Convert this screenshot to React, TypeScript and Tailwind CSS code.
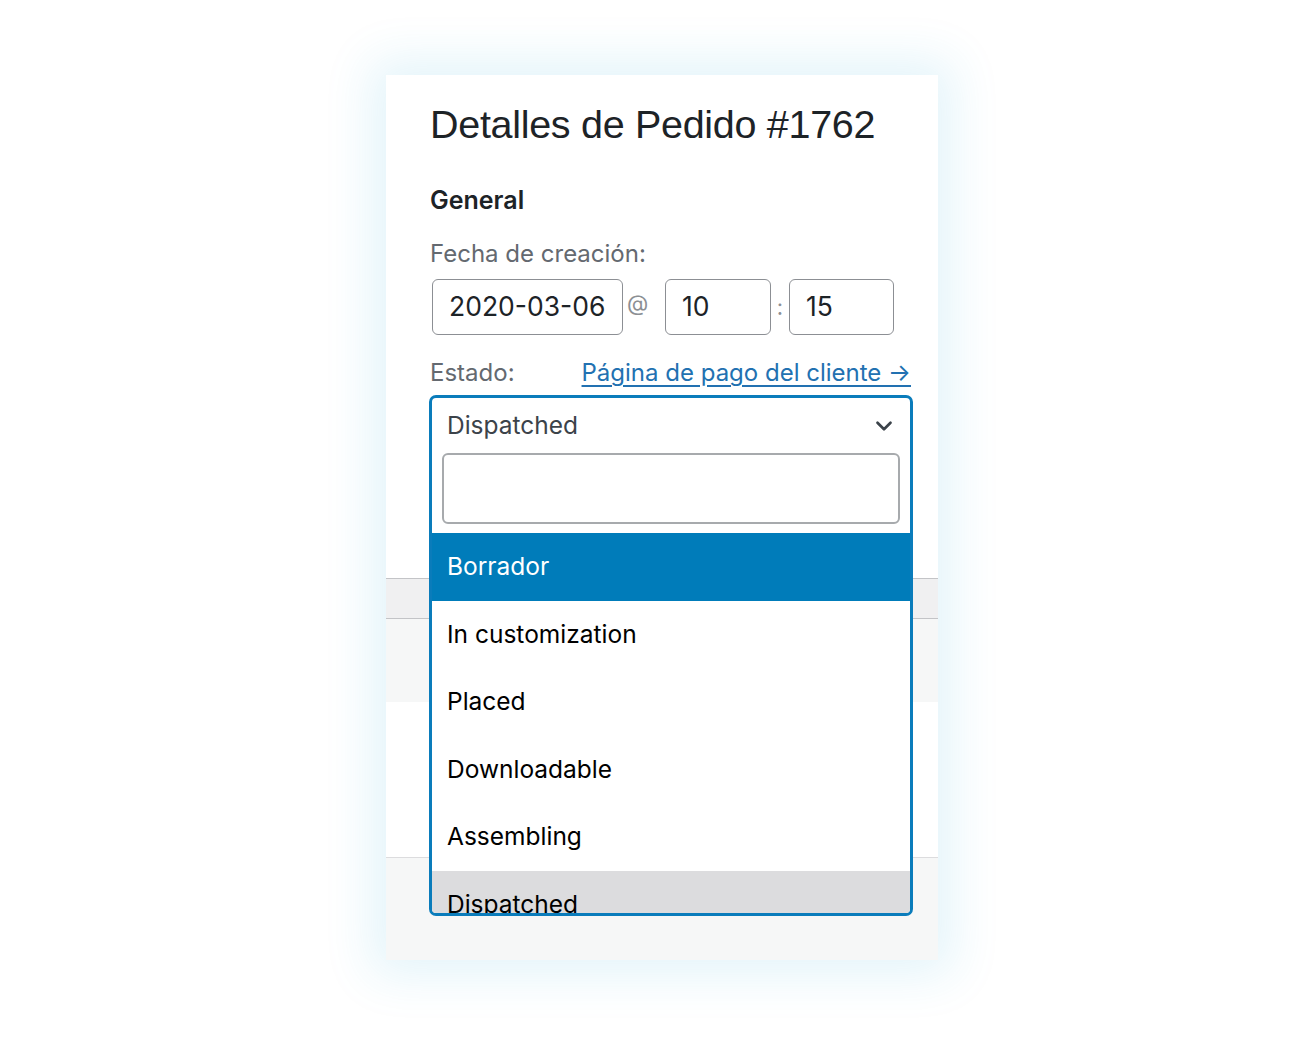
import { ChevronDown } from 'lucide-react';

const options = ['Borrador', 'In customization', 'Placed', 'Downloadable', 'Assembling', 'Dispatched'];

export default function App() {
  return (
    <div className="min-h-[1039px] bg-white pt-[75px] font-['Inter','Noto_Sans',sans-serif]">
      <div className="relative ml-[386px] w-[552px] h-[885px] bg-white shadow-[0_0_45px_14px_rgba(40,170,215,0.13)] flex flex-col">
        {/* top section */}
        <div className="h-[503px] px-[44px] pt-[26px]">
          <h2 className="font-['Liberation_Sans',sans-serif] text-[39.5px] leading-[46px] text-[#1d2327] tracking-[-0.3px]">
            Detalles de Pedido #1762
          </h2>
          <h3 className="mt-[38px] text-[25px] font-semibold text-[#1d2327] leading-[30px]">General</h3>
          <p className="mt-[25px] text-[24px] text-[#646970] leading-[28px]">Fecha de creación:</p>
          <div className="mt-[11px] flex items-center">
            <div className="ml-[2px] w-[191px] h-[56px] border border-[#8c8f94] rounded-[6px] flex items-center pl-[16px] text-[26.5px] text-[#1d2327]">
              2020-03-06
            </div>
            <span className="w-[42px] pl-[4px] text-[22px] text-[#8c8f94] self-start mt-[8px]">@</span>
            <div className="w-[106px] h-[56px] border border-[#8c8f94] rounded-[6px] flex items-center pl-[16px] text-[26.5px] text-[#1d2327]">
              10
            </div>
            <span className="w-[18px] text-center text-[22px] text-[#8c8f94]">:</span>
            <div className="w-[105px] h-[56px] border border-[#8c8f94] rounded-[6px] flex items-center pl-[16px] text-[26.5px] text-[#1d2327]">
              15
            </div>
          </div>
          <div className="mt-[20px] flex items-center justify-between w-[481px]">
            <span className="text-[24px] text-[#646970]">Estado:</span>
            <a href="#" className="text-[24px] text-[#2271b1] underline underline-offset-[4px]">
              Página de pago del cliente →
            </a>
          </div>
        </div>
        {/* background rows behind menu */}
        <div className="h-[41px] bg-[#f0f0f1] border-y border-[#c3c4c7]" />
        <div className="h-[83px] bg-[#f6f7f7]" />
        <div className="h-[155px] bg-white" />
        <div className="flex-1 bg-[#f6f7f7] border-t border-[#dcdcde]" />

        {/* open select menu */}
        <div className="absolute left-[43px] top-[320px] w-[484px] h-[521px] border-[3px] border-[#0a7cbb] rounded-[7px] bg-white overflow-hidden">
          <div className="h-[55px] flex items-center justify-between pl-[15px] pr-[13px]">
            <span className="text-[24.5px] text-[#3c434a]">Dispatched</span>
            <ChevronDown className="w-[26px] h-[26px] text-[#3c434a]" strokeWidth={2.5} />
          </div>
          <div className="mx-[10px] h-[71px] border-2 border-[#a7aaad] rounded-[6px]" />
          <ul className="mt-[9px]">
            {options.map((o, i) => (
              <li
                key={o}
                className={
                  i === 0
                    ? 'h-[67.5px] flex items-center pl-[15px] text-[24.5px] bg-[#007cba] text-white'
                    : i === options.length - 1
                    ? 'h-[67.5px] flex items-center pl-[15px] text-[24.5px] bg-[#dcdcde] text-[#000]'
                    : 'h-[67.5px] flex items-center pl-[15px] text-[24.5px] text-[#000]'
                }
              >
                {o}
              </li>
            ))}
          </ul>
        </div>
      </div>
    </div>
  );
}
